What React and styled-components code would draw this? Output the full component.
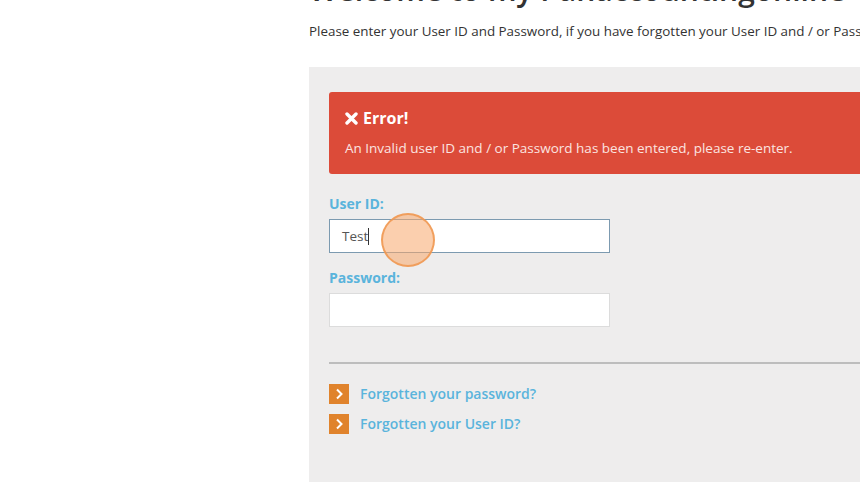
import React from "react";
import styled, { createGlobalStyle } from "styled-components";

const GlobalStyle = createGlobalStyle`
  html, body {
    margin: 0;
    padding: 0;
    background: #ffffff;
    overflow: hidden;
  }
  body {
    font-family: "Open Sans", "Noto Sans", sans-serif;
    color: #333333;
  }
`;

const Page = styled.div`
  width: 860px;
  height: 482px;
  overflow: hidden;
  padding-left: 309px;
  box-sizing: border-box;
`;

const Heading = styled.h1`
  margin: -28px 0 0 0;
  font-size: 30px;
  line-height: 36px;
  font-weight: 600;
  color: #333333;
  white-space: nowrap;
`;

const Intro = styled.p`
  margin: 13px 0 0 0;
  font-size: 13.4px;
  line-height: 20px;
  color: #333333;
  white-space: nowrap;
`;

const Panel = styled.section`
  margin-top: 26px;
  width: 700px;
  height: 460px;
  background: #eeeded;
  padding: 25px 0 0 20px;
  box-sizing: border-box;
`;

const Alert = styled.div`
  background: #dc4b39;
  border-radius: 3px;
  padding: 15px 15px 16px 16px;
  color: #ffffff;
`;

const AlertTitle = styled.div`
  display: flex;
  align-items: center;
  gap: 5px;
  font-size: 16px;
  font-weight: 700;
  line-height: 22px;
`;

const AlertText = styled.div`
  margin-top: 9px;
  font-size: 13.5px;
  line-height: 20px;
  color: #fbe4e0;
`;

const Form = styled.div`
  display: flex;
  flex-direction: column;
  width: 281px;
`;

const Label = styled.label`
  display: block;
  margin-top: ${(p) => p.$top}px;
  font-size: 14px;
  font-weight: 700;
  line-height: 20px;
  color: #5ab4dc;
`;

const Field = styled.div`
  position: relative;
  margin-top: 5px;
  height: 34px;
  box-sizing: border-box;
  background: #ffffff;
  border: 1px solid ${(p) => (p.$focused ? "#7c9ab0" : "#dcdcdc")};
  padding: 0 12px;
  display: flex;
  align-items: center;
  font-size: 13.5px;
  color: #555555;
`;

const Caret = styled.span`
  display: inline-block;
  width: 1px;
  height: 17px;
  background: #333;
`;

const ClickMarker = styled.span`
  position: absolute;
  left: 51px;
  top: -7px;
  width: 50px;
  height: 50px;
  border-radius: 50%;
  background: rgba(247, 168, 108, 0.55);
  border: 2px solid rgba(240, 150, 80, 0.85);
`;

const Divider = styled.hr`
  margin: 35px 0 0 0;
  border: 0;
  height: 2px;
  background: #bdbdbd;
`;

const Links = styled.ul`
  list-style: none;
  margin: 20px 0 0 0;
  padding: 0;
  display: flex;
  flex-direction: column;
  gap: 10px;
`;

const LinkRow = styled.li`
  display: flex;
  align-items: center;
  gap: 11px;
  height: 20px;
`;

const ArrowBox = styled.span`
  width: 20px;
  height: 20px;
  background: #e0832c;
  display: flex;
  align-items: center;
  justify-content: center;
`;

const LinkText = styled.a`
  font-size: 14px;
  font-weight: 600;
  color: #5ab4dc;
  text-decoration: none;
  line-height: 20px;
`;

const Chevron = () => (
  <svg width="10" height="12" viewBox="0 0 10 12">
    <path d="M3 1.5 L7.5 6 L3 10.5" fill="none" stroke="#ffffff" strokeWidth="2" />
  </svg>
);

const Cross = () => (
  <svg width="13" height="13" viewBox="0 0 13 13">
    <path d="M2 2 L11 11 M11 2 L2 11" stroke="#ffffff" strokeWidth="3.4" strokeLinecap="round" />
  </svg>
);

export default function App() {
  return (
    <>
      <GlobalStyle />
      <Page>
        <Heading>Welcome to my Panaccountingonline</Heading>
        <Intro>
          Please enter your User ID and Password, if you have forgotten your User ID and / or Password please use the links below.
        </Intro>
        <Panel>
          <Alert>
            <AlertTitle>
              <Cross />
              Error!
            </AlertTitle>
            <AlertText>An Invalid user ID and / or Password has been entered, please re-enter.</AlertText>
          </Alert>
          <Form>
            <Label $top={20}>User ID:</Label>
            <Field $focused>
              Test
              <Caret />
              <ClickMarker />
            </Field>
            <Label $top={15}>Password:</Label>
            <Field />
          </Form>
          <Divider />
          <Links>
            <LinkRow>
              <ArrowBox><Chevron /></ArrowBox>
              <LinkText href="#">Forgotten your password?</LinkText>
            </LinkRow>
            <LinkRow>
              <ArrowBox><Chevron /></ArrowBox>
              <LinkText href="#">Forgotten your User ID?</LinkText>
            </LinkRow>
          </Links>
        </Panel>
      </Page>
    </>
  );
}
